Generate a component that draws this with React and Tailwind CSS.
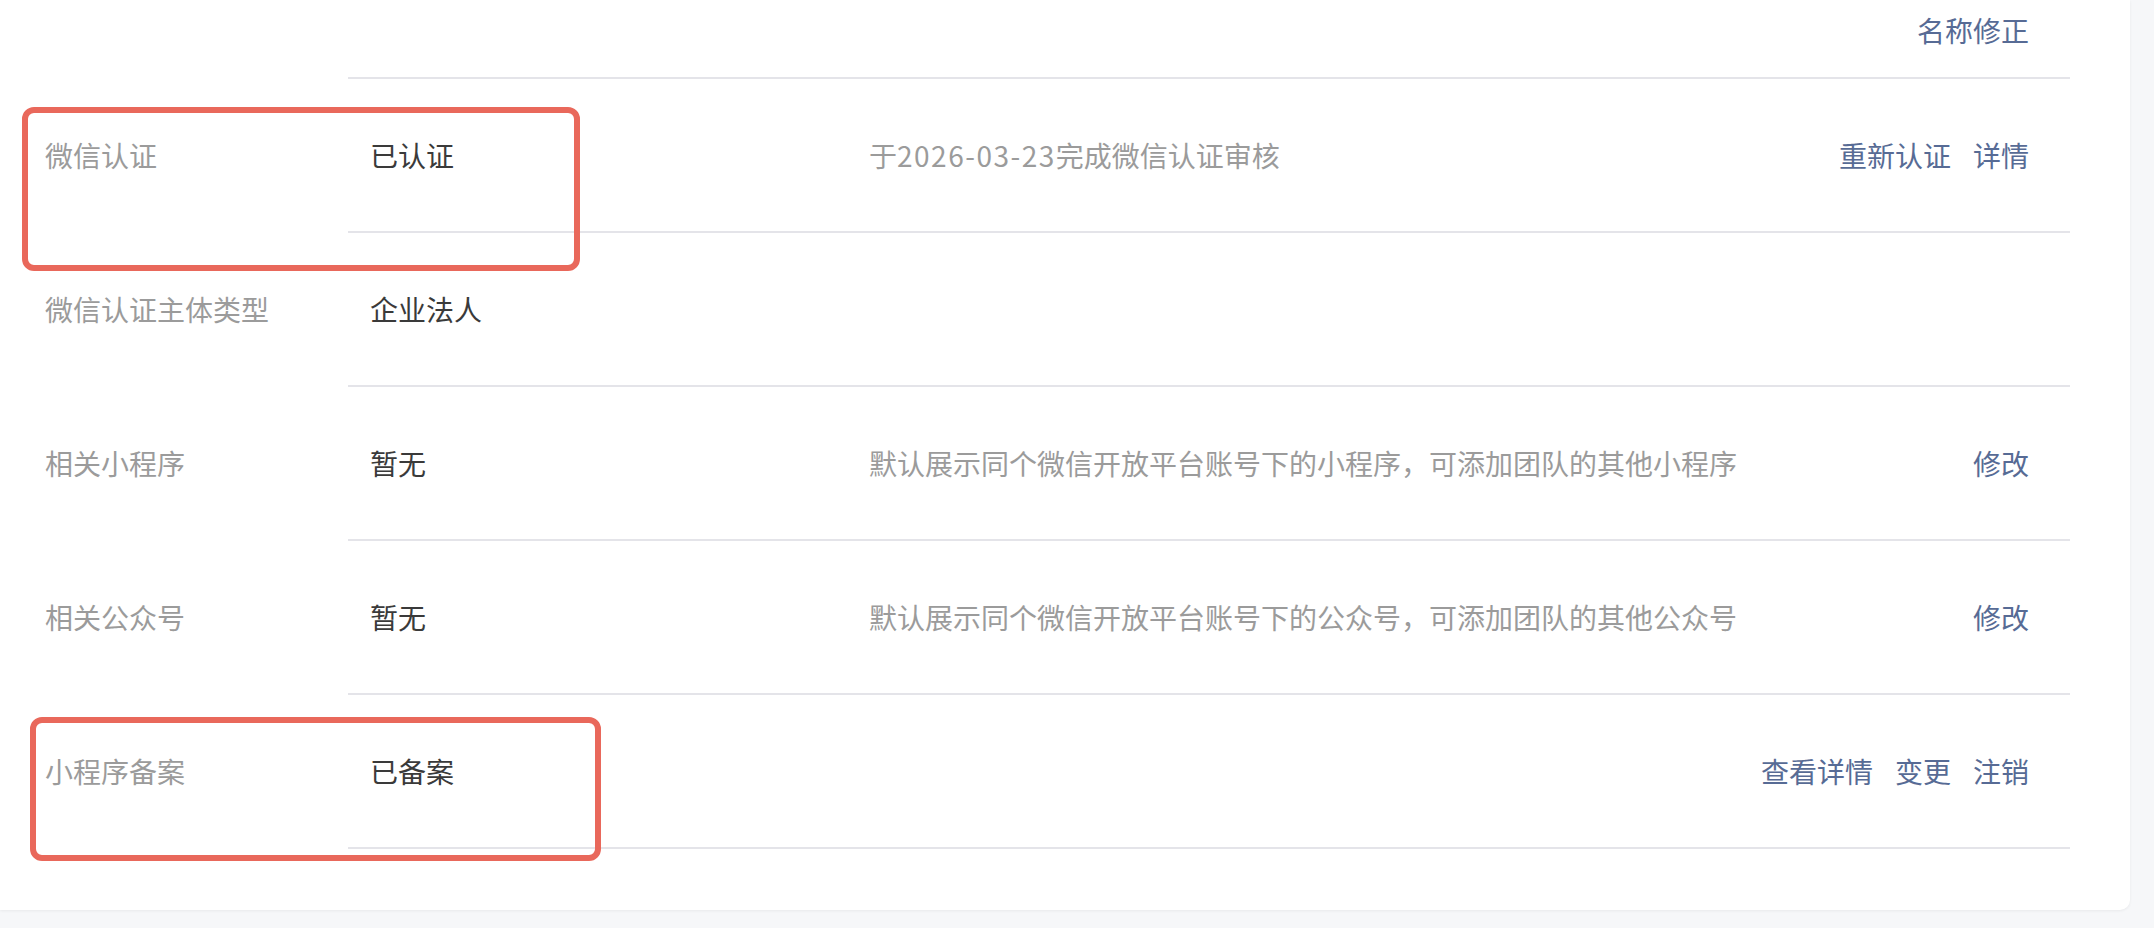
import React from 'react';

const rows = [
    {label: '微信认证', value: '已认证', desc: <>于<span className="tracking-[1.5px]">2026-03-23</span>完成微信认证审核</>, actions: ['重新认证', '详情']},
    {label: '微信认证主体类型', value: '企业法人', desc: '', actions: []},
    {label: '相关小程序', value: '暂无', desc: '默认展示同个微信开放平台账号下的小程序，可添加团队的其他小程序', actions: ['修改']},
    {label: '相关公众号', value: '暂无', desc: '默认展示同个微信开放平台账号下的公众号，可添加团队的其他公众号', actions: ['修改']},
    {label: '小程序备案', value: '已备案', desc: '', actions: ['查看详情', '变更', '注销']},
];

const Actions = ({items}) => (
    <div className="flex items-center gap-[22px] pr-[41px] text-[#576b95]">
        {items.map((a) => (
            <a key={a} className="cursor-pointer whitespace-nowrap">{a}</a>
        ))}
    </div>
);

const Watermark = () => {
    const cells = [];
    for (let r = 0; r < 12; r++) {
        for (let c = 0; c < 6; c++) {
            cells.push(
                <span key={`${r}-${c}`} className="w-[431px] h-[92px] flex items-center">
                    L209hr8q187
                </span>
            );
        }
    }
    return (
        <div className="pointer-events-none absolute left-[-119px] top-[-58px] w-[2586px] flex flex-wrap text-[28px] text-black/[0.02] font-['Liberation_Sans',sans-serif]">
            {cells}
        </div>
    );
};

export default function App() {
    return (
        <div className="relative w-full h-[928px] overflow-hidden bg-[#f6f7f9] font-['Noto_Sans_CJK_SC','Noto_Sans',sans-serif] text-[28px] leading-[40px]">
            <div className="mr-[24px] h-[910px] bg-white rounded-br-[10px] shadow-[0_1px_3px_rgba(0,0,0,0.06)]">
                {/* top row, mostly scrolled out of view */}
                <div className="flex h-[79px]">
                    <div className="w-[348px] shrink-0" />
                    <div className="flex-1 mr-[60px] border-b-2 border-[#e4e4e9] flex justify-end items-start pt-[10px]">
                        <Actions items={['名称修正']} />
                    </div>
                </div>

                {rows.map((row) => (
                    <div key={row.label} className="flex h-[154px]">
                        <div className="w-[348px] shrink-0 pl-[45px] pb-[2px] flex items-center text-[#9b9b9b]">
                            {row.label}
                        </div>
                        <div className="flex-1 mr-[60px] border-b-2 border-[#e4e4e9] flex items-center">
                            <div className="w-[521px] shrink-0 pl-[22px] text-[#3a3a3a]">{row.value}</div>
                            <div className="flex-1 text-[#9b9b9b] whitespace-nowrap">{row.desc}</div>
                            <Actions items={row.actions} />
                        </div>
                    </div>
                ))}
            </div>

            <Watermark />

            {/* highlight boxes */}
            <div className="pointer-events-none absolute left-[22px] top-[107px] w-[558px] h-[164px] border-[6px] border-[#e9685b] rounded-[12px]" />
            <div className="pointer-events-none absolute left-[30px] top-[717px] w-[571px] h-[144px] border-[6px] border-[#e9685b] rounded-[12px]" />
        </div>
    );
}
